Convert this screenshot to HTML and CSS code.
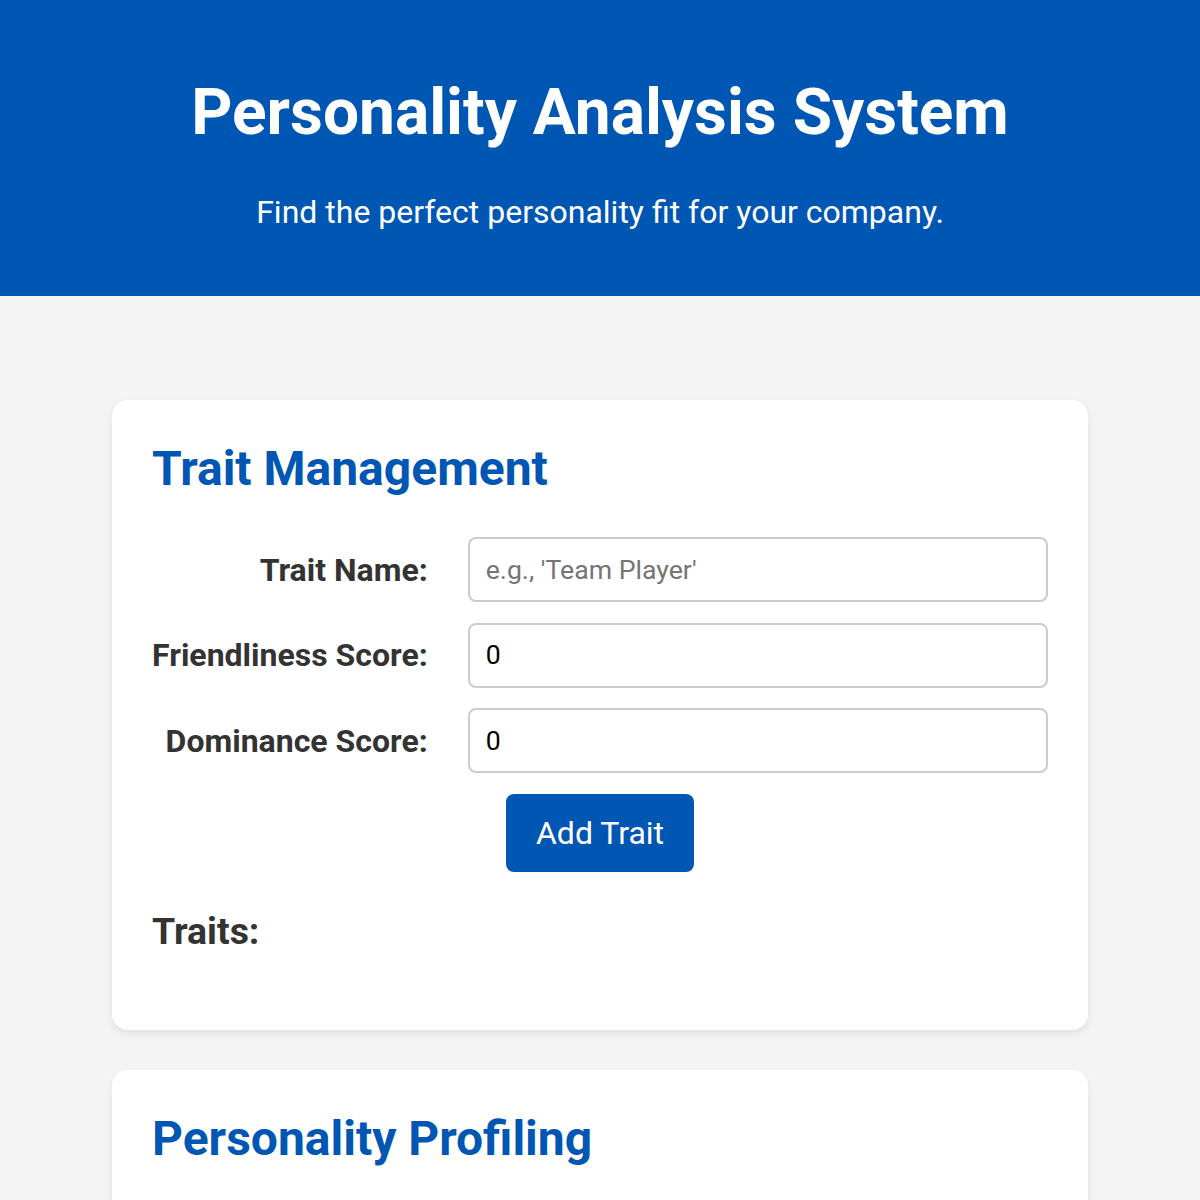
FILE: index.html
```html
<!DOCTYPE html>
<html lang="en">
<head>
<meta charset="utf-8">
<title>Personality Analysis System</title>
<link rel="stylesheet" href="styles.css">
</head>
<body>
<header class="site-header">
  <h1 class="site-title">Personality Analysis System</h1>
  <p class="site-subtitle">Find the perfect personality fit for your company.</p>
</header>
<main class="main">
  <section class="card">
    <h2 class="card-title">Trait Management</h2>
    <form class="trait-form">
      <label class="field-label" for="trait-name">Trait Name:</label>
      <input class="field-input" id="trait-name" type="text" placeholder="e.g., 'Team Player'">
      <label class="field-label" for="friendliness">Friendliness Score:</label>
      <input class="field-input" id="friendliness" type="text" value="0">
      <label class="field-label" for="dominance">Dominance Score:</label>
      <input class="field-input" id="dominance" type="text" value="0">
      <div class="form-actions">
        <button class="btn" type="button">Add Trait</button>
      </div>
    </form>
    <h3 class="list-title">Traits:</h3>
    <ul class="trait-list"></ul>
  </section>
  <section class="card">
    <h2 class="card-title">Personality Profiling</h2>
  </section>
</main>
</body>
</html>
```
FILE: styles.css
```css
* { box-sizing: border-box; }

body {
  margin: 0;
  background: #f4f4f4;
  font-family: Roboto, "Liberation Sans", Arial, sans-serif;
  font-size: 32px;
  color: #333;
}

.site-header {
  background: #0056b3;
  color: #fff;
  text-align: center;
  padding: 32px 32px 33px;
}

.site-title {
  font-size: 64px;
  font-weight: 700;
  margin: 43px 0;
  line-height: normal;
}

.site-subtitle {
  font-size: 32px;
  margin: 32px 0;
  line-height: normal;
}

.main {
  padding: 104px 112px 40px;
}

.card {
  background: #fff;
  border-radius: 16px;
  box-shadow: 0 4px 8px rgba(0, 0, 0, 0.08);
  padding: 40px;
  margin: 0 auto 40px;
  max-width: 976px;
}

.card-title {
  color: #0056b3;
  font-size: 48px;
  font-weight: 700;
  margin: 0 0 40px;
  line-height: normal;
}

.trait-form {
  display: grid;
  grid-template-columns: auto 1fr;
  column-gap: 40px;
  row-gap: 20.5px;
  align-items: center;
}

.field-label {
  font-weight: 700;
  text-align: right;
  color: #333;
}

.field-input {
  font-family: inherit;
  font-size: 26.67px;
  line-height: normal;
  height: 65px;
  padding: 0 16px;
  border: 2px solid #ccc;
  border-radius: 8px;
  color: #000;
  width: 100%;
  background: #fff;
}

.field-input::placeholder { color: #757575; }

.form-actions {
  grid-column: 1 / -1;
  display: flex;
  justify-content: center;
}

.btn {
  font-family: inherit;
  font-size: 32px;
  line-height: normal;
  color: #fff;
  background: #0056b3;
  border: none;
  border-radius: 8px;
  padding: 20px 30px;
}

.list-title {
  font-size: 37.44px;
  font-weight: 700;
  margin: 37px 0;
  line-height: normal;
  color: #333;
}

.trait-list {
  margin: 0;
  padding: 0;
  list-style: none;
}
```
